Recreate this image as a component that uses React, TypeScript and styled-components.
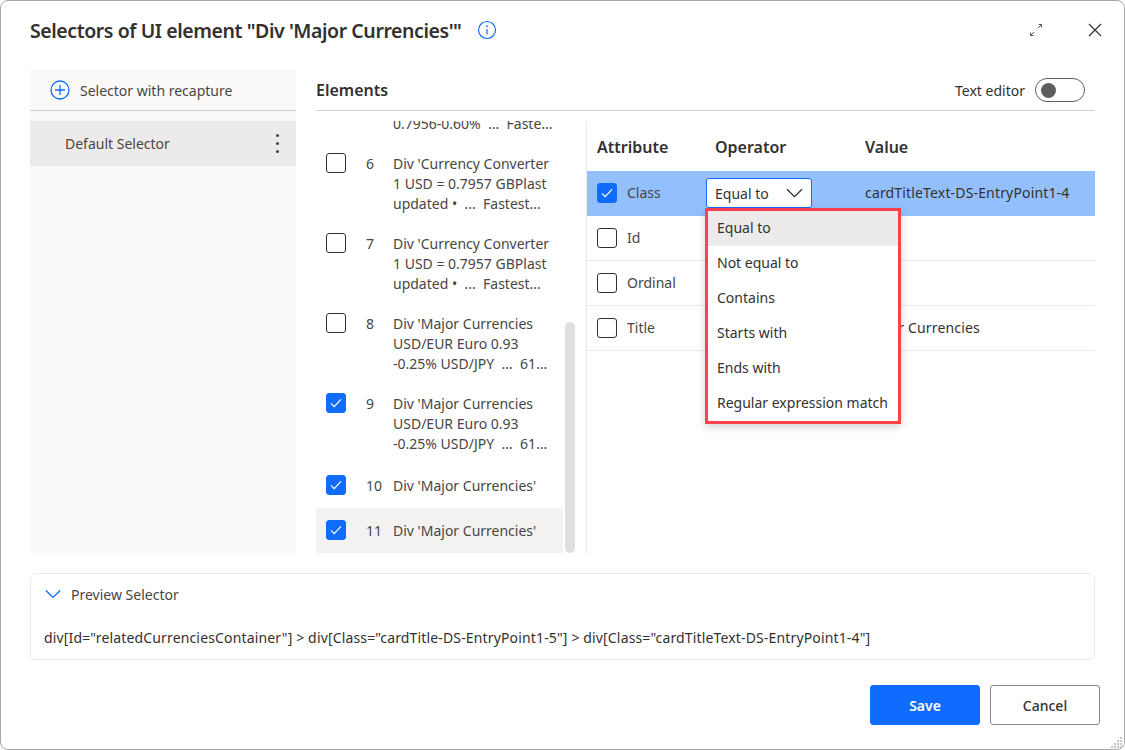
import React from "react";
import styled, { createGlobalStyle } from "styled-components";

const GlobalStyle = createGlobalStyle`
  html, body {
    margin: 0;
    padding: 0;
    background: #ffffff;
  }
  * {
    box-sizing: border-box;
  }
`;

const Dialog = styled.div`
  width: 1125px;
  height: 750px;
  padding: 0 29px;
  display: flex;
  flex-direction: column;
  position: relative;
  overflow: hidden;
  background: #fff;
  border: 1px solid #a8a8a8;
  border-radius: 8px;
  font-family: "Noto Sans", "Open Sans", sans-serif;
  font-size: 14px;
  color: #323130;
`;

const Header = styled.header`
  height: 60px;
  margin-top: -1px;
  display: flex;
  align-items: center;
  flex-shrink: 0;
`;

const Title = styled.h1`
  margin: 0;
  font-size: 19.5px;
  font-weight: 600;
  letter-spacing: -0.43px;
  color: #323130;
`;

const InfoButton = styled.span`
  display: flex;
  margin-left: 15px;
  color: #0f6cff;
`;

const WindowActions = styled.div`
  margin-left: auto;
  display: flex;
  align-items: center;
  gap: 44px;
  margin-right: -8px;
`;

const Body = styled.div`
  margin-top: 10px;
  height: 483px;
  display: grid;
  grid-template-columns: 266px 1fr;
  grid-template-rows: 483px;
  gap: 20px;
  flex-shrink: 0;
`;

const Sidebar = styled.aside`
  background: #faf9f8;
`;

const RecaptureRow = styled.div`
  height: 41px;
  padding-left: 20px;
  display: flex;
  align-items: center;
  gap: 10px;
  color: #484644;
  border-bottom: 1px solid #d2d0ce;
`;

const SelectorRow = styled.div`
  height: 45px;
  margin-top: 10px;
  padding: 0 17px 0 35px;
  display: flex;
  align-items: center;
  justify-content: space-between;
  background: #edebe9;
  color: #484644;
`;

const Dots = styled.span`
  display: flex;
  flex-direction: column;
  gap: 5px;

  i {
    display: block;
    width: 3px;
    height: 3px;
    border-radius: 50%;
    background: #484644;
  }
`;

const Main = styled.section`
  display: flex;
  flex-direction: column;
  min-width: 0;
  min-height: 0;
`;

const MainHead = styled.div`
  height: 41px;
  flex-shrink: 0;
  display: flex;
  align-items: center;
  justify-content: space-between;
  border-bottom: 1px solid #d2d0ce;
`;

const SectionTitle = styled.h2`
  margin: 0;
  font-size: 16px;
  font-weight: 600;
  color: #323130;
`;

const ToggleWrap = styled.label`
  display: flex;
  align-items: center;
  gap: 10px;
  margin-right: 10px;
  color: #323130;
`;

const ToggleTrack = styled.span`
  width: 50px;
  height: 24px;
  padding-left: 5px;
  display: flex;
  align-items: center;
  border: 1px solid #605e5c;
  border-radius: 12px;
`;

const ToggleKnob = styled.span`
  width: 15px;
  height: 15px;
  border-radius: 50%;
  background: #605e5c;
`;

const Split = styled.div`
  margin-top: 10px;
  flex: 1;
  min-height: 0;
  display: grid;
  grid-template-columns: 271px 1fr;
  grid-template-rows: minmax(0, 1fr);
`;

const ListPane = styled.div`
  position: relative;
  overflow: hidden;
  border-right: 1px solid #edebe9;
`;

const ListScroll = styled.div`
  margin-top: -58px;
  width: 247px;
`;

const ElementRow = styled.div<{ $active?: boolean; $single?: boolean }>`
  display: grid;
  grid-template-columns: 20px 47px 1fr;
  align-items: start;
  padding: ${(p) => (p.$single ? "12px 0 12px 10px" : "10px 0 9px 10px")};
  line-height: 20px;
  background: ${(p) => (p.$active ? "#f3f2f1" : "transparent")};
`;

const RowNumber = styled.span`
  padding: 1px 0 0 20px;
  white-space: nowrap;
  color: #484644;
`;

const RowText = styled.span`
  padding-top: 1px;
  color: #484644;
  white-space: pre-wrap;
`;

const Box = styled.span<{ $checked?: boolean }>`
  width: 20px;
  height: 20px;
  flex-shrink: 0;
  display: flex;
  align-items: center;
  justify-content: center;
  border-radius: 3px;
  border: 1px solid ${(p) => (p.$checked ? "#0f6cff" : "#323130")};
  background: ${(p) => (p.$checked ? "#0f6cff" : "#fff")};
`;

const ScrollThumb = styled.div`
  position: absolute;
  right: 11px;
  top: 201px;
  bottom: 0;
  width: 10px;
  border-radius: 5px;
  background: #e1dfdd;
`;

const AttrPane = styled.div`
  position: relative;
`;

const AttrHead = styled.div`
  height: 50px;
  padding: 2px 0 0 10px;
  display: grid;
  grid-template-columns: 118px 150px 1fr;
  align-items: center;
`;

const AttrHeading = styled.span`
  font-size: 16px;
  font-weight: 600;
  color: #323130;
`;

const AttrRow = styled.div<{ $selected?: boolean }>`
  height: 45px;
  padding-left: 10px;
  display: grid;
  grid-template-columns: 109px 159px 1fr;
  align-items: center;
  border-bottom: 1px solid ${(p) => (p.$selected ? "#94bfff" : "#edebe9")};
  background: ${(p) => (p.$selected ? "#94bfff" : "transparent")};
`;

const AttrName = styled.span`
  display: flex;
  align-items: center;
  gap: 10px;
  color: #484644;
`;

const AttrLabel = styled.span`
  padding-bottom: 2px;
`;

const AttrValue = styled.span`
  padding-bottom: 2px;
  letter-spacing: 0.16px;
  color: #323130;
  white-space: nowrap;
`;

const OperatorSelect = styled.div`
  width: 106px;
  height: 30px;
  padding: 0 8px;
  display: flex;
  align-items: center;
  justify-content: space-between;
  background: #fff;
  border: 1px solid #0f6cff;
  border-radius: 3px;
  color: #323130;
`;

const OperatorMenu = styled.ul`
  position: absolute;
  left: 118px;
  top: 87px;
  width: 196px;
  margin: 0;
  padding: 0;
  list-style: none;
  background: #fff;
  border: 3px solid #f9424b;
  box-shadow: 0 3px 8px rgba(0, 0, 0, 0.18);
`;

const OperatorItem = styled.li<{ $current?: boolean }>`
  height: 35px;
  padding: 0 0 2px 9px;
  display: flex;
  align-items: center;
  white-space: nowrap;
  color: #323130;
  background: ${(p) => (p.$current ? "#edebe9" : "transparent")};
`;

const Preview = styled.section`
  margin-top: 20px;
  height: 87px;
  flex-shrink: 0;
  padding: 0 13px;
  background: #fff;
  border: 1px solid #edebe9;
  border-radius: 6px;
`;

const PreviewHead = styled.div`
  height: 40px;
  padding-left: 1px;
  display: flex;
  align-items: center;
  gap: 10px;
  color: #484644;
`;

const PreviewCode = styled.div`
  margin-top: 2px;
  line-height: 44px;
  letter-spacing: 0.15px;
  white-space: nowrap;
  color: #323130;
`;

const Footer = styled.footer`
  margin: 25px -5px 0 0;
  display: flex;
  justify-content: flex-end;
  gap: 10px;
`;

const Button = styled.button<{ $primary?: boolean }>`
  width: 110px;
  height: 40px;
  padding: 0;
  font: inherit;
  font-weight: ${(p) => (p.$primary ? 600 : 500)};
  color: ${(p) => (p.$primary ? "#fff" : "#323130")};
  background: ${(p) => (p.$primary ? "#0f6cff" : "#fff")};
  border: 1px solid ${(p) => (p.$primary ? "#0f6cff" : "#8a8886")};
  border-radius: 3px;
`;

const Grip = styled.svg`
  position: absolute;
  right: 1px;
  bottom: 1px;
`;

const Check = () => (
  <svg width="12" height="10" viewBox="0 0 12 10" fill="none">
    <path d="M1 5.4 4.2 8.6 11 1.4" stroke="#fff" strokeWidth="1.2" />
  </svg>
);

const Chevron = ({ color }: { color: string }) => (
  <svg width="17" height="10" viewBox="0 0 17 10" fill="none">
    <path d="M1 1.2 8.5 8.6 16 1.2" stroke={color} strokeWidth="1.3" />
  </svg>
);

const elementRows = [
  { n: "", text: "\n\n0.7956-0.60%  ...  Faste...", hidden: true },
  { n: "6", text: "Div 'Currency Converter\n1 USD = 0.7957 GBPlast\nupdated •  ...  Fastest..." },
  { n: "7", text: "Div 'Currency Converter\n1 USD = 0.7957 GBPlast\nupdated •  ...  Fastest..." },
  { n: "8", text: "Div 'Major Currencies\nUSD/EUR Euro 0.93\n-0.25% USD/JPY  ...  61..." },
  { n: "9", text: "Div 'Major Currencies\nUSD/EUR Euro 0.93\n-0.25% USD/JPY  ...  61...", checked: true },
  { n: "10", text: "Div 'Major Currencies'", checked: true, single: true },
  { n: "11", text: "Div 'Major Currencies'", checked: true, single: true, active: true },
];

const attributes = [
  { name: "Class", value: "cardTitleText-DS-EntryPoint1-4", checked: true },
  { name: "Id", value: "" },
  { name: "Ordinal", value: "" },
  { name: "Title", value: "Major Currencies" },
];

const operators = ["Equal to", "Not equal to", "Contains", "Starts with", "Ends with", "Regular expression match"];

export default function App() {
  return (
    <>
      <GlobalStyle />
      <Dialog>
        <Header>
          <Title>Selectors of UI element "Div 'Major Currencies'"</Title>
          <InfoButton>
            <svg width="20" height="20" viewBox="0 0 20 20" fill="none">
              <circle cx="10" cy="10" r="8.5" stroke="currentColor" strokeWidth="1.2" />
              <circle cx="10" cy="6.2" r="0.9" fill="currentColor" />
              <path d="M10 9v5.6" stroke="currentColor" strokeWidth="1.2" />
            </svg>
          </InfoButton>
          <WindowActions>
            <svg width="14" height="14" viewBox="0 0 14 14" fill="none" stroke="#605e5c">
              <path d="M1.5 12.5 5 9M9 5l3.5-3.5M9.5 1.5h3v3M1.5 9.5v3h3" />
            </svg>
            <svg width="16" height="16" viewBox="0 0 16 16" fill="none" stroke="#323130" strokeWidth="1.2">
              <path d="M2 2l12 12M14 2 2 14" />
            </svg>
          </WindowActions>
        </Header>

        <Body>
          <Sidebar>
            <RecaptureRow>
              <svg width="20" height="20" viewBox="0 0 20 20" fill="none" stroke="#0f6cff" strokeWidth="1.3">
                <circle cx="10" cy="10" r="9" />
                <path d="M10 5v10M5 10h10" />
              </svg>
              Selector with recapture
            </RecaptureRow>
            <SelectorRow>
              Default Selector
              <Dots>
                <i />
                <i />
                <i />
              </Dots>
            </SelectorRow>
          </Sidebar>

          <Main>
            <MainHead>
              <SectionTitle>Elements</SectionTitle>
              <ToggleWrap>
                Text editor
                <ToggleTrack>
                  <ToggleKnob />
                </ToggleTrack>
              </ToggleWrap>
            </MainHead>
            <Split>
              <ListPane>
                <ListScroll>
                  {elementRows.map((row, i) => (
                    <ElementRow key={i} $active={row.active} $single={row.single}>
                      {row.hidden ? <span /> : <Box $checked={row.checked}>{row.checked && <Check />}</Box>}
                      <RowNumber>{row.n}</RowNumber>
                      <RowText>{row.text}</RowText>
                    </ElementRow>
                  ))}
                </ListScroll>
                <ScrollThumb />
              </ListPane>

              <AttrPane>
                <AttrHead>
                  <AttrHeading>Attribute</AttrHeading>
                  <AttrHeading>Operator</AttrHeading>
                  <AttrHeading>Value</AttrHeading>
                </AttrHead>
                {attributes.map((attr) => (
                  <AttrRow key={attr.name} $selected={attr.checked}>
                    <AttrName>
                      <Box $checked={attr.checked}>{attr.checked && <Check />}</Box>
                      <AttrLabel>{attr.name}</AttrLabel>
                    </AttrName>
                    <span>
                      {attr.checked && (
                        <OperatorSelect>
                          Equal to
                          <Chevron color="#323130" />
                        </OperatorSelect>
                      )}
                    </span>
                    <AttrValue>{attr.value}</AttrValue>
                  </AttrRow>
                ))}
                <OperatorMenu>
                  {operators.map((op, i) => (
                    <OperatorItem key={op} $current={i === 0}>
                      {op}
                    </OperatorItem>
                  ))}
                </OperatorMenu>
              </AttrPane>
            </Split>
          </Main>
        </Body>

        <Preview>
          <PreviewHead>
            <svg width="16" height="10" viewBox="0 0 17 10" fill="none">
              <path d="M1 1.2 8.5 8.6 16 1.2" stroke="#0f6cff" strokeWidth="1.4" />
            </svg>
            Preview Selector
          </PreviewHead>
          <PreviewCode>
            div[Id="relatedCurrenciesContainer"] &gt; div[Class="cardTitle-DS-EntryPoint1-5"] &gt; div[Class="cardTitleText-DS-EntryPoint1-4"]
          </PreviewCode>
        </Preview>

        <Footer>
          <Button $primary>Save</Button>
          <Button>Cancel</Button>
        </Footer>

        <Grip width="14" height="14" viewBox="0 0 14 14" fill="#c8c6c4">
          <rect x="11" y="3" width="2" height="2" />
          <rect x="8" y="6" width="2" height="2" />
          <rect x="11" y="6" width="2" height="2" />
          <rect x="5" y="9" width="2" height="2" />
          <rect x="8" y="9" width="2" height="2" />
          <rect x="11" y="9" width="2" height="2" />
          <rect x="2" y="12" width="2" height="2" />
          <rect x="5" y="12" width="2" height="2" />
          <rect x="8" y="12" width="2" height="2" />
          <rect x="11" y="12" width="2" height="2" />
        </Grip>
      </Dialog>
    </>
  );
}
